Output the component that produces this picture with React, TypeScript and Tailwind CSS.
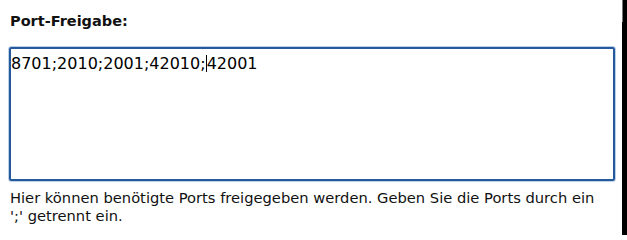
export default function App() {
  return (
    <div className="flex h-[235px] w-[627px] bg-white">
      <div className="flex-1 pl-[8px] pt-[13px] font-['DejaVu_Sans',Verdana,sans-serif] text-black">
        <h3 className="pl-[2px] text-[14.5px] leading-[17px] font-bold text-[#111]">Port-Freigabe:</h3>

        {/* textarea in focus: light glow + dark blue border */}
        <div className="mt-[16px] w-[608px] rounded-[3px] border border-[#bcd0e8]">
          <div className="h-[134px] rounded-[2px] border-2 border-[#24599b] pt-[3px] text-[16px] leading-[19px]">
            8701;2010;2001;42010;
            <span className="inline-block h-[17px] w-px translate-y-[3px] bg-black" />
            42001
          </div>
        </div>

        <p className="mt-[7px] w-[600px] pl-[2px] text-[14.7px] leading-[17.5px] text-[#111]">
          Hier können benötigte Ports freigegeben werden. Geben Sie die Ports durch ein ';' getrennt ein.
        </p>
      </div>
      <div className="flex w-[5px] flex-col bg-black">
        <div className="h-[22px] w-px bg-[#777]" />
      </div>
    </div>
  );
}
